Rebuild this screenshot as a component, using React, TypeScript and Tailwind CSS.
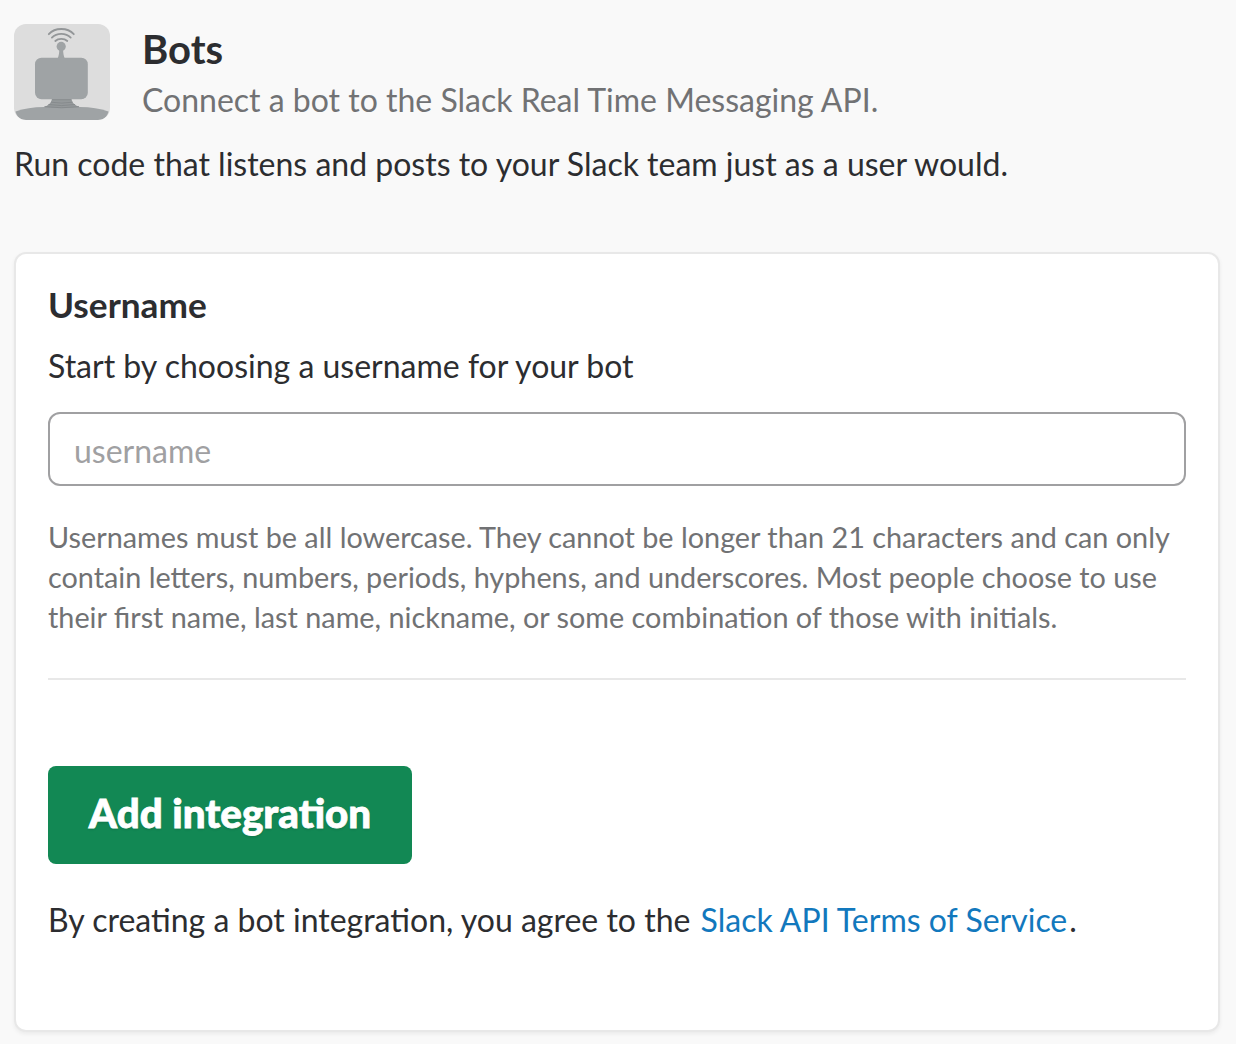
function BotIcon() {
  return (
    <svg viewBox="0 0 96 96" className="size-24 shrink-0 rounded-xl" aria-hidden="true">
      <rect width="96" height="96" fill="#ddd" />
      <g fill="#9fa3a5">
        <circle cx="47.2" cy="22.4" r="4.6" />
        <path d="M45.3 25H49.1C49.1 29 49.6 32 50.8 34.5H43.6C44.8 32 45.3 29 45.3 25Z" />
        <rect x="21" y="33.7" width="52.8" height="41.5" rx="6.5" />
        <path d="M1.5 87.5C10 84.5 19 83 30 83H66C77 83 86 84.5 94.5 87.5C93.5 92.5 89 96 84 96H12C7 96 2.5 92.5 1.5 87.5Z" />
      </g>
      <path d="M37.8 75.3H57.6C58 79 61.5 81.5 65.5 83Q47.5 85 30.3 83C34 81.5 37.4 79 37.8 75.3Z" fill="#95999b" />
      <g fill="none" stroke="#85898b" strokeWidth="0.9">
        <path d="M38 75.7H57.4" />
        <path d="M37 78.2Q47.5 80 58.5 78.2" />
        <path d="M34.5 80.5Q47.5 82.7 61 80.5" />
        <path d="M30.5 82.7Q47.5 84.8 65 82.7" />
      </g>
      <g fill="none" stroke="#939698" strokeWidth="1.8" strokeLinecap="round">
        <path d="M34.8 10.2Q39.5 5 47.3 5Q55 5 59.8 10.2" />
        <path d="M37.9 13.6Q41.5 9.8 47.3 9.8Q53 9.8 56.7 13.6" />
        <path d="M41.3 17Q43.5 14.9 47.3 14.9Q51 14.9 53.3 17" />
      </g>
    </svg>
  );
}

export default function App() {
  return (
    <main className="flex h-[1044px] w-[1236px] flex-col bg-[#f9f9f9] px-3.5 pt-6 font-['Lato',sans-serif] text-[32px] text-[#2c2d30]">
      <header className="flex h-24 gap-8">
        <BotIcon />
        <div className="-mt-px flex flex-col">
          <h1 className="text-[40px] leading-[52px] font-bold">Bots</h1>
          <p className="leading-[50px] text-[#717274]">Connect a bot to the Slack Real Time Messaging API.</p>
        </div>
      </header>
      <p className="mt-[19px] leading-[50px]">Run code that listens and posts to your Slack team just as a user would.</p>
      <section className="mt-[63px] flex h-[780px] w-[1206px] flex-col items-start rounded-xl border-2 border-[#e8e8e8] bg-white px-8 pt-[26px] shadow-[0_2px_4px_rgba(0,0,0,0.06)]">
        <h2 className="text-[35.2px] leading-[48px] font-bold">Username</h2>
        <label htmlFor="username" className="mt-[13px] leading-[50px]">Start by choosing a username for your bot</label>
        <input
          id="username"
          placeholder="username"
          className="mt-[21px] h-[74px] w-full rounded-xl border-2 border-[#a0a0a2] px-6 pt-0.5 placeholder:text-[#a0a0a2]"
        />
        <p className="mt-[31px] text-[28.8px] leading-10 whitespace-nowrap text-[#717274]">
          Usernames must be all lowercase. They cannot be longer than 21 characters and can only
          <br />
          contain letters, numbers, periods, hyphens, and underscores. Most people choose to use
          <br />
          their first name, last name, nickname, or some combination of those with initials.
        </p>
        <hr className="mt-[41px] w-full border-t-2 border-[#e8e8e8]" />
        <button className="mt-[86px] h-[98px] w-[364px] rounded-lg bg-[#128854] pb-[3px] text-[40.3px] font-black text-white [-webkit-text-stroke:0.8px_white] [text-shadow:0_2px_2px_rgba(0,0,0,0.1)]">
          Add integration
        </button>
        <p className="mt-[31px] leading-[50px]">
          By creating a bot integration, you agree to the{" "}
          <a href="#" className="px-0.5 text-[#1278bd]">Slack API Terms of Service</a>.
        </p>
      </section>
    </main>
  );
}
